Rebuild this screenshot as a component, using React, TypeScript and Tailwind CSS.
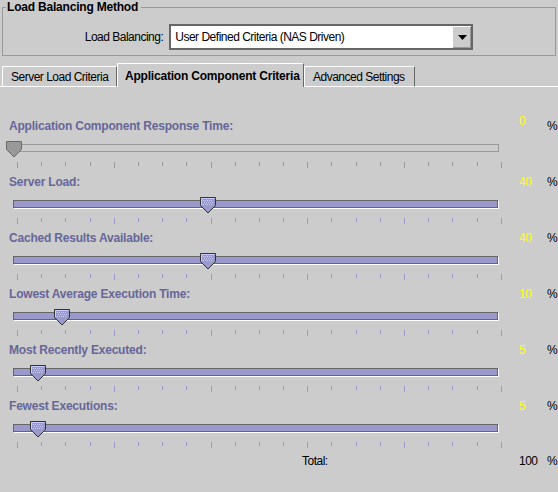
import React from 'react'

type Row = { label: string; value: number; disabled?: boolean }

const ROWS: Row[] = [
  { label: 'Application Component Response Time:', value: 0, disabled: true },
  { label: 'Server Load:', value: 40 },
  { label: 'Cached Results Available:', value: 40 },
  { label: 'Lowest Average Execution Time:', value: 10 },
  { label: 'Most Recently Executed:', value: 5 },
  { label: 'Fewest Executions:', value: 5 },
]

const TICKS = Array.from({ length: 21 }, (_, i) => i)

function Thumb({ disabled }: { disabled?: boolean }) {
  if (disabled) {
    return (
      <svg width="16" height="17" viewBox="0 0 16 17">
        <polygon points="0.5,0.5 15.5,0.5 15.5,8.5 8,16 0.5,8.5" fill="#999999" stroke="#6a6a6a" />
      </svg>
    )
  }
  const dots: [number, number][] = []
  for (let y = 3; y <= 8; y += 2) {
    for (let x = 3 + ((y - 3) / 2) % 2; x <= 12; x += 2) dots.push([x, y])
  }
  return (
    <svg width="16" height="17" viewBox="0 0 16 17">
      <polygon points="0.5,0.5 15.5,0.5 15.5,8.5 8,16 0.5,8.5" fill="#9999cc" stroke="#333333" />
      <polyline points="1.5,8 1.5,1.5 14.5,1.5" fill="none" stroke="#ccccff" />
      {dots.map(([x, y], i) => (
        <rect key={i} x={x} y={y} width="1" height="1" fill="#ccccff" />
      ))}
    </svg>
  )
}

function SliderRow({ row }: { row: Row }) {
  return (
    <div>
      <div className="flex h-[14px] items-center leading-[14px]">
        <span className="flex-1 whitespace-nowrap pl-[9px] font-bold tracking-[-0.2px] text-[#666699]">{row.label}</span>
        <span className={`w-[28px] tracking-[-0.5px] text-[#ffff00] ${row.disabled ? '-translate-y-[5px]' : ''}`}>{row.value}</span>
        <span className="w-[11px] text-black">%</span>
      </div>
      <div className="relative h-[42px] pt-[11px]">
        {row.disabled ? (
          <div className="ml-[13px] h-[8px] w-[486px] border border-[#999999]" />
        ) : (
          <div className="ml-[13px] h-[8px] w-[485px] border border-[#666666] bg-[#9999cc] shadow-[1px_1px_0_#ffffff]" />
        )}
        <div className="ml-[17px] mt-[10px] flex w-[485px] items-start justify-between">
          {TICKS.map((t) => (
            <div
              key={t}
              className={`w-px ${t % 4 === 0 ? 'h-[6px]' : 'h-[4px]'} ${row.disabled ? 'bg-[#999999]' : 'bg-[#9999cc]'}`}
            />
          ))}
        </div>
        <div className="absolute top-[8px]" style={{ left: 6 + (row.value / 100) * 484 }}>
          <Thumb disabled={row.disabled} />
        </div>
      </div>
    </div>
  )
}

export default function App() {
  return (
    <div className="h-[492px] w-[558px] overflow-hidden bg-[#cccccc] font-['Liberation_Sans',Arial,sans-serif] text-[12px] text-black">
      {/* Load Balancing Method group */}
      <div className="pt-[7px]">
        <div className="relative mx-[2px] h-[49px] border border-[#999999]">
          <span className="absolute -top-[8px] left-[3px] whitespace-nowrap bg-[#cccccc] pl-[1px] pr-[3px] font-bold leading-[14px] tracking-[-0.2px]">
            Load Balancing Method
          </span>
          <div className="flex items-center justify-center gap-[6px] pt-[16px]">
            <span className="whitespace-nowrap tracking-[-0.5px]">Load Balancing:</span>
            <div className="flex h-[26px] w-[304px] border-2 border-[#666666] bg-white">
              <span className="flex-1 whitespace-nowrap pl-[4px] leading-[22px] tracking-[-0.5px]">User Defined Criteria (NAS Driven)</span>
              <div className="flex w-[19px] items-center justify-center border-l border-t border-white bg-[#cccccc] shadow-[inset_-1px_-1px_0_#999999]">
                <svg width="9" height="5" viewBox="0 0 9 5">
                  <polygon points="0,0 9,0 4.5,5" fill="#000000" />
                </svg>
              </div>
            </div>
          </div>
        </div>
      </div>

      {/* Tabs */}
      <div className="mt-[7px] flex h-[24px] items-end whitespace-nowrap">
        <div className="h-[21px] w-[2px] border-b border-white" />
        <div className="flex h-[21px] w-[115px] items-center border-b border-l border-r border-t border-b-white border-l-white border-r-[#666666] border-t-white pl-[8px] tracking-[-0.5px]">
          Server Load Criteria
        </div>
        <div className="flex h-[24px] w-[187px] items-center border-l border-r border-t border-l-white border-r-[#666666] border-t-white pl-[7px] font-bold tracking-[-0.2px]">
          Application Component Criteria
        </div>
        <div className="flex h-[21px] w-[111px] items-center border-b border-l border-r border-t border-b-white border-l-white border-r-[#666666] border-t-white pl-[8px] tracking-[-0.5px]">
          Advanced Settings
        </div>
        <div className="h-[21px] flex-1 border-b border-white" />
      </div>

      {/* Criteria sliders */}
      <div className="pt-[32px]">
        {ROWS.map((r) => (
          <SliderRow key={r.label} row={r} />
        ))}
        <div className="-mt-[1px] flex h-[14px] items-center leading-[14px] tracking-[-0.5px]">
          <span className="flex-1 pl-[302px]">Total:</span>
          <span className="w-[28px]">100</span>
          <span className="w-[11px]">%</span>
        </div>
      </div>
    </div>
  )
}
